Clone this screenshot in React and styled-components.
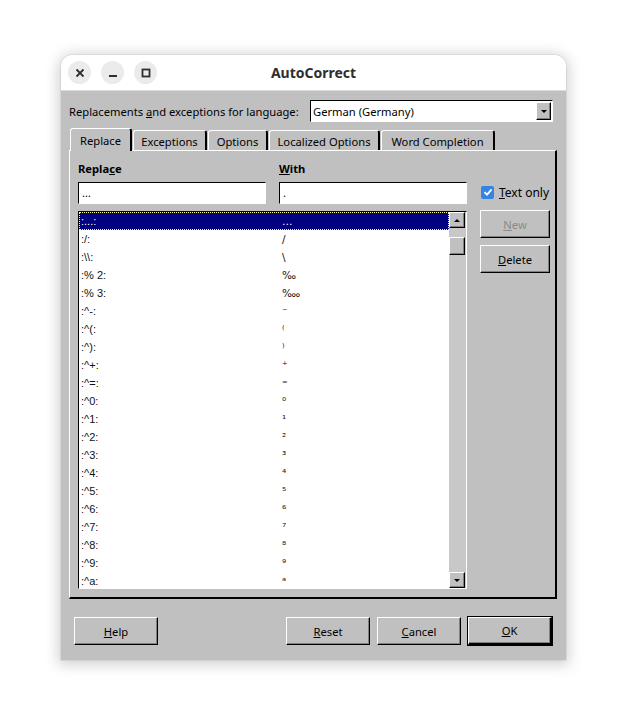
import React from "react";
import styled, { createGlobalStyle, css } from "styled-components";

const GlobalStyle = createGlobalStyle`
    html, body {
        margin: 0;
        padding: 0;
        background: #ffffff;
    }
    body {
        font-family: "Noto Sans", "Open Sans", sans-serif;
        font-size: 11.2px;
        color: #000;
    }
`

const entries = [
    [":...:", "…"],
    [":/:", "/"],
    [":\\\\:", "\\"],
    [":% 2:", "‰"],
    [":% 3:", "‱"],
    [":^-:", "⁻"],
    [":^(:", "⁽"],
    [":^):", "⁾"],
    [":^+:", "⁺"],
    [":^=:", "⁼"],
    [":^0:", "⁰"],
    [":^1:", "¹"],
    [":^2:", "²"],
    [":^3:", "³"],
    [":^4:", "⁴"],
    [":^5:", "⁵"],
    [":^6:", "⁶"],
    [":^7:", "⁷"],
    [":^8:", "⁸"],
    [":^9:", "⁹"],
    [":^a:", "ᵃ"],
];

const tabs = [
    { label: "Replace", width: 62, active: true },
    { label: "Exceptions", width: 74 },
    { label: "Options", width: 60 },
    { label: "Localized Options", width: 111 },
    { label: "Word Completion", width: 114 },
];

export default function App() {
    return (
        <Page>
            <GlobalStyle />
            <Window>
                <TitleBar>
                    <Controls>
                        <RoundButton>
                            <svg width="10" height="10" viewBox="0 0 10 10">
                                <path d="M1.5 1.5 L8.5 8.5 M8.5 1.5 L1.5 8.5" stroke="#2e2e2e" strokeWidth="1.8" />
                            </svg>
                        </RoundButton>
                        <RoundButton>
                            <svg width="10" height="10" viewBox="0 0 10 10">
                                <rect x="1" y="7" width="8" height="2" fill="#2e2e2e" />
                            </svg>
                        </RoundButton>
                        <RoundButton>
                            <svg width="10" height="10" viewBox="0 0 10 10">
                                <rect x="1.5" y="1.5" width="7" height="7" fill="none" stroke="#2e2e2e" strokeWidth="1.8" />
                            </svg>
                        </RoundButton>
                    </Controls>
                    <Title>AutoCorrect</Title>
                </TitleBar>
                <Body>
                    <LanguageRow>
                        <LangLabel>Replacements <u>a</u>nd exceptions for language:</LangLabel>
                        <Combo>
                            <ComboText>German (Germany)</ComboText>
                            <SmallArrowButton>
                                <Arrow down />
                            </SmallArrowButton>
                        </Combo>
                    </LanguageRow>
                    <TabStrip>
                        {tabs.map(t => (
                            <Tab key={t.label} active={t.active} style={{ width: t.width }}>{t.label}</Tab>
                        ))}
                    </TabStrip>
                    <Panel>
                        <Main>
                            <Labels>
                                <FieldLabel>Repla<u>c</u>e</FieldLabel>
                                <FieldLabel><u>W</u>ith</FieldLabel>
                            </Labels>
                            <Inputs>
                                <TextField>…</TextField>
                                <TextField>.</TextField>
                            </Inputs>
                            <ListBox>
                                <Rows>
                                    {entries.map(([from, to], i) => (
                                        <Row key={i} selected={i === 0}>
                                            <Cell>{from}</Cell>
                                            <Cell symbol>{to}</Cell>
                                        </Row>
                                    ))}
                                </Rows>
                                <ScrollBar>
                                    <ScrollButton><Arrow /></ScrollButton>
                                    <Thumb />
                                    <Track />
                                    <ScrollButton><Arrow down /></ScrollButton>
                                </ScrollBar>
                            </ListBox>
                        </Main>
                        <Side>
                            <CheckRow>
                                <CheckBox>
                                    <svg width="10" height="10" viewBox="0 0 10 10">
                                        <path d="M1.5 5.2 L4 7.6 L8.6 2.4" fill="none" stroke="#fff" strokeWidth="1.8" />
                                    </svg>
                                </CheckBox>
                                <span><u>T</u>ext only</span>
                            </CheckRow>
                            <Button disabled><u>N</u>ew</Button>
                            <Button><u>D</u>elete</Button>
                        </Side>
                    </Panel>
                    <Footer>
                        <Button wide><u>H</u>elp</Button>
                        <Spacer />
                        <Button wide><u>R</u>eset</Button>
                        <Button wide><u>C</u>ancel</Button>
                        <Button wide primary><u>O</u>K</Button>
                    </Footer>
                </Body>
            </Window>
        </Page>
    )
}

const raised = css`
    border-top: 1px solid #ffffff;
    border-left: 1px solid #ffffff;
    border-right: 1px solid #000000;
    border-bottom: 1px solid #000000;
    box-shadow: inset -1px -1px 0 #808080;
`

const sunken = css`
    border-top: 1px solid #000000;
    border-left: 1px solid #000000;
    border-right: 1px solid #ffffff;
    border-bottom: 1px solid #ffffff;
`

const Page = styled.div`
    width: 627px;
    height: 727px;
    padding-top: 55px;
    box-sizing: border-box;
    display: flex;
    justify-content: center;
    align-items: flex-start;
`
const Window = styled.div`
    width: 505px;
    height: 605px;
    border-radius: 12px 12px 0 0;
    overflow: hidden;
    display: flex;
    flex-direction: column;
    box-shadow: 0 2px 14px 3px rgba(0, 0, 0, 0.18), 0 0 0 1px rgba(0, 0, 0, 0.06);
`
const TitleBar = styled.div`
    height: 36px;
    background: #ffffff;
    position: relative;
    display: flex;
    align-items: center;
    justify-content: center;
    border-bottom: 1px solid #dcdcdc;
    box-sizing: border-box;
`
const Controls = styled.div`
    position: absolute;
    left: 7px;
    top: 6px;
    display: flex;
    gap: 10px;
`
const RoundButton = styled.div`
    width: 23px;
    height: 23px;
    border-radius: 50%;
    background: #ebebeb;
    display: flex;
    align-items: center;
    justify-content: center;
`
const Title = styled.div`
    font-family: "Noto Sans", sans-serif;
    font-weight: bold;
    font-size: 14px;
    color: #2e2e2e;
    margin-top: -1px;
`
const Body = styled.div`
    flex: 1;
    background: #c0c0c0;
    padding: 9px 9px 0 8px;
    display: flex;
    flex-direction: column;
`
const LanguageRow = styled.div`
    display: flex;
    align-items: center;
    justify-content: space-between;
    height: 22px;
    padding-right: 4px;
`
const LangLabel = styled.span`
    white-space: nowrap;
`
const Combo = styled.div`
    width: 243px;
    height: 22px;
    box-sizing: border-box;
    background: #fff;
    ${sunken};
    display: flex;
    align-items: center;
`
const ComboText = styled.div`
    flex: 1;
    padding-left: 2px;
`
const SmallArrowButton = styled.div`
    width: 15px;
    height: 18px;
    box-sizing: border-box;
    background: #c0c0c0;
    ${raised};
    display: flex;
    align-items: center;
    justify-content: center;
    margin-right: 1px;
`
const Arrow = styled.div`
    width: 0;
    height: 0;
    border-left: 3px solid transparent;
    border-right: 3px solid transparent;
    ${p => p.down ? "border-top: 3px solid #000;" : "border-bottom: 3px solid #000;"}
`
const TabStrip = styled.div`
    display: flex;
    align-items: flex-end;
    margin-top: 6px;
    padding-left: 1px;
    gap: 1px;
    height: 22px;
`
const Tab = styled.div`
    height: 20px;
    box-sizing: border-box;
    border-top: 1px solid #fff;
    border-left: 1px solid #fff;
    border-right: 2px solid #000;
    border-radius: 3px 3px 0 0;
    display: flex;
    align-items: center;
    justify-content: center;
    padding-top: 2px;
    position: relative;
    ${p => p.active && css`
        padding-top: 1px;
        margin-bottom: -1px;
        height: 23px;
        z-index: 1;
        background: #c0c0c0;
    `}
`
const Panel = styled.div`
    height: 449px;
    box-sizing: border-box;
    border-top: 1px solid #fff;
    border-left: 1px solid #fff;
    border-right: 2px solid #000;
    border-bottom: 2px solid #000;
    padding: 10px 8px 8px 8px;
    display: flex;
    gap: 13px;
`
const Main = styled.div`
    width: 389px;
    display: flex;
    flex-direction: column;
`
const Labels = styled.div`
    display: grid;
    grid-template-columns: 188px 188px;
    column-gap: 13px;
    height: 16px;
`
const FieldLabel = styled.div`
    font-weight: bold;
    line-height: 16px;
`
const Inputs = styled.div`
    display: grid;
    grid-template-columns: 188px 188px;
    column-gap: 13px;
    margin-top: 5px;
`
const TextField = styled.div`
    height: 22px;
    box-sizing: border-box;
    background: #fff;
    ${sunken};
    padding-left: 3px;
    line-height: 20px;
`
const ListBox = styled.div`
    margin-top: 7px;
    height: 380px;
    box-sizing: border-box;
    background: #fff;
    ${sunken};
    display: flex;
    overflow: hidden;
`
const Rows = styled.div`
    flex: 1;
    display: flex;
    flex-direction: column;
`
const Row = styled.div`
    height: 18px;
    flex-shrink: 0;
    display: grid;
    grid-template-columns: 201px 1fr;
    font-family: "Liberation Sans", Arial, sans-serif;
    font-size: 11px;
    line-height: 19px;
    color: #111;
    background: ${p => p.selected ? "#000080" : "#fff"};
    ${p => p.selected && css`
        outline: 1px dotted #ffff80;
        outline-offset: -1px;
        color: #ffffff;
    `}
`
const Cell = styled.div`
    padding-left: 2px;
    white-space: nowrap;
    overflow: hidden;
    ${p => p.symbol && css`
        font-family: "DejaVu Sans", "Liberation Sans", sans-serif;
        font-size: 10.5px;
    `}
`
const ScrollBar = styled.div`
    width: 16px;
    background: #c8c8c8;
    display: flex;
    flex-direction: column;
    padding: 0 1px 0 0;
`
const ScrollButton = styled.div`
    width: 16px;
    height: 16px;
    box-sizing: border-box;
    background: #c0c0c0;
    ${raised};
    display: flex;
    align-items: center;
    justify-content: center;
    flex-shrink: 0;
`
const Thumb = styled(ScrollButton)`
    margin-top: 9px;
    height: 18px;
`
const Track = styled.div`
    flex: 1;
`
const Side = styled.div`
    width: 70px;
    display: flex;
    flex-direction: column;
    gap: 7px;
    padding-top: 24px;
`
const CheckRow = styled.div`
    display: flex;
    align-items: center;
    gap: 5px;
    height: 14px;
    margin-bottom: 4px;
    margin-left: 1px;
    white-space: nowrap;
    font-size: 12px;
`
const CheckBox = styled.div`
    width: 13px;
    height: 13px;
    border-radius: 2px;
    background: #3584e4;
    display: flex;
    align-items: center;
    justify-content: center;
`
const Button = styled.div`
    height: 28px;
    box-sizing: border-box;
    width: ${p => p.wide ? "84px" : "70px"};
    background: #c0c0c0;
    ${raised};
    display: flex;
    align-items: center;
    justify-content: center;
    color: ${p => p.disabled ? "#8a8a8a" : "#000"};
    ${p => p.primary && css`
        outline: 1px solid #000;
        outline-offset: 0;
        border-right: 2px solid #000;
        border-bottom: 2px solid #000;
    `}
`
const Footer = styled.div`
    display: flex;
    align-items: center;
    gap: 7px;
    margin-top: 18px;
    padding: 0 5px 0 5px;
`
const Spacer = styled.div`
    flex: 1;
`
